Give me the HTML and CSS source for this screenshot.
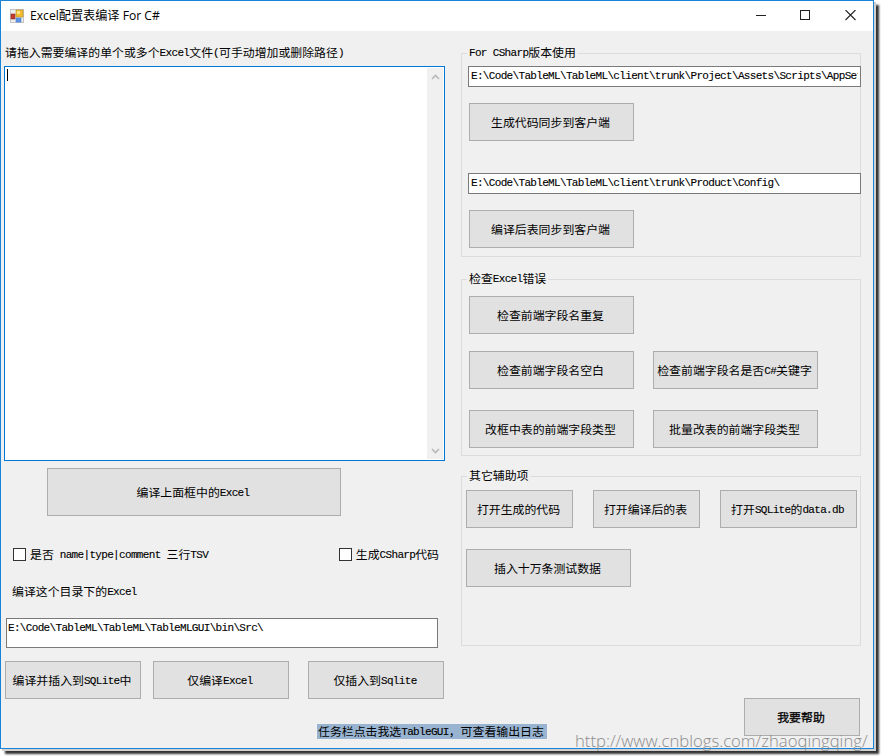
FILE: index.html
```html
<!DOCTYPE html>
<html lang="zh-CN">
<head>
<meta charset="utf-8">
<title>Excel配置表编译 For C#</title>
<link rel="stylesheet" href="styles.css">
</head>
<body>
<div class="window">
  <header class="titlebar">
    <svg class="app-icon" width="14" height="14" viewBox="0 0 14 14">
      <rect x=".5" y=".5" width="13" height="13" fill="#eee" stroke="#c4c4c4"/>
      <rect x="6" y="1" width="7" height="7" fill="#f2bd2c" stroke="#b98d2a" stroke-width=".6"/>
      <rect x="7" y="2" width="3" height="3" fill="#ffe28a"/>
      <rect x="1" y="5" width="4" height="5" fill="#c0392f" stroke="#8f2c26" stroke-width=".6"/>
      <rect x="6" y="9" width="5" height="4" fill="#5b94e8" stroke="#4a78c8" stroke-width=".6"/>
    </svg>
    <h1 class="title">Excel配置表编译 For C#</h1>
    <svg class="controls" width="102" height="12" viewBox="0 0 102 12" fill="none" stroke="#222">
      <path d="M0 5.500H10"/>
      <rect x="44.5" y=".5" width="9" height="9"/>
      <path d="M89.500 0L99.500 10M99.500 0L89.500 10" stroke-width="1.1"/>
    </svg>
  </header>
  <main class="body">
    <section class="left">
      <p class="label prompt">请拖入需要编译的单个或多个<i>Excel</i>文件<i>(</i>可手动增加或删除路径<i>)</i></p>
      <div class="files">
        <span class="caret"></span>
        <div class="scroll">
          <svg width="9" height="6" viewBox="0 0 9 6"><path d="M1 5L4.500 1.500L8 5" fill="none" stroke="#b8b8b8" stroke-width="1.7"/></svg>
          <svg width="9" height="6" viewBox="0 0 9 6"><path d="M1 1L4.500 4.500L8 1" fill="none" stroke="#b8b8b8" stroke-width="1.7"/></svg>
        </div>
      </div>
      <button class="btn main-btn">编译上面框中的<i>Excel</i></button>
      <div class="checks">
        <label class="check"><span class="box"></span><span>是否<i> name|type|comment </i>三行<i>TSV</i></span></label>
        <label class="check"><span class="box"></span><span>生成<i>CSharp</i>代码</span></label>
      </div>
      <p class="label dir">编译这个目录下的<i>Excel</i></p>
      <div class="input dir-input"><i>E:\Code\TableML\TableML\TableMLGUI\bin\Src\</i></div>
      <div class="actions">
        <button class="btn">编译并插入到<i>SQLite</i>中</button>
        <button class="btn">仅编译<i>Excel</i></button>
        <button class="btn">仅插入到<i>Sqlite</i></button>
      </div>
      <p class="hint">任务栏点击我选<i>TableGUI</i>，可查看输出日志</p>
    </section>
    <section class="right">
      <div class="group g1">
        <h2 class="legend"><i>For CSharp</i>版本使用</h2>
        <div class="input"><i>E:\Code\TableML\TableML\client\trunk\Project\Assets\Scripts\AppSet</i></div>
        <button class="btn wide">生成代码同步到客户端</button>
        <div class="input second"><i>E:\Code\TableML\TableML\client\trunk\Product\Config\</i></div>
        <button class="btn wide">编译后表同步到客户端</button>
      </div>
      <div class="group g2">
        <h2 class="legend">检查<i>Excel</i>错误</h2>
        <div class="checks-grid">
          <button class="btn wide solo">检查前端字段名重复</button>
          <button class="btn wide">检查前端字段名空白</button>
          <button class="btn wide">检查前端字段名是否<i>C#</i>关键字</button>
          <button class="btn wide">改框中表的前端字段类型</button>
          <button class="btn wide">批量改表的前端字段类型</button>
        </div>
      </div>
      <div class="group g3">
        <h2 class="legend">其它辅助项</h2>
        <div class="open-row">
          <button class="btn">打开生成的代码</button>
          <button class="btn">打开编译后的表</button>
          <button class="btn">打开<i>SQLite</i>的<i>data.db</i></button>
        </div>
        <button class="btn wide">插入十万条测试数据</button>
      </div>
      <button class="btn help">我要帮助</button>
    </section>
  </main>
</div>
<div class="watermark">http://www.cnblogs.com/zhaoqingqing/</div>
</body>
</html>
```
FILE: styles.css
```css
* { box-sizing: border-box; }
body {
  margin: 0;
  width: 881px;
  height: 756px;
  overflow: hidden;
  position: relative;
  background: #fff;
  color: #000;
  font: 11.9px/16px "Noto Sans CJK SC", sans-serif;
}
h1, h2, p { margin: 0; font-weight: 400; }
i {
  font: 11px/1 "Liberation Mono", monospace;
  letter-spacing: -0.67px;
  white-space: pre;
  position: relative;
  top: -1px;
  -webkit-text-stroke: .12px #000;
}
.window {
  width: 874px;
  height: 749px;
  background: #f0f0f0;
  border: 1px solid #1883d7;
  box-shadow: 2px 2px 0 0 #d0d0d0, 5px 5px 2px 0 #333;
}
.titlebar {
  height: 30px;
  background: #fff;
  display: flex;
  align-items: center;
  padding: 0 15px 0 9px;
}
.title {
  font: 12.15px/16px "Open Sans", "Noto Sans CJK SC", sans-serif;
  margin-left: 6px;
  flex: 1;
}
.body { display: flex; height: 717px; }
.left { width: 441px; margin-left: 3px; display: flex; flex-direction: column; }
.label { white-space: nowrap; }
.prompt { margin: 13px 0 6px 1px; }
.files {
  height: 395px;
  background: #fff;
  border: 1px solid #0078d7;
  display: flex;
  justify-content: space-between;
  padding: 1px;
}
.caret { width: 1px; height: 12px; margin: 1px 0 0 1px; background: #000; }
.scroll {
  width: 16px;
  background: #f0f0f0;
  display: flex;
  flex-direction: column;
  align-items: center;
  justify-content: space-between;
  padding: 6px 0 5px;
}
.btn {
  height: 38px;
  padding: 0 2px 0 0;
  border: 1px solid #adadad;
  border-radius: 0;
  background: #e1e1e1;
  color: #000;
  font: inherit;
  white-space: nowrap;
}
.main-btn { width: 294px; height: 48px; margin: 7px 0 0 43px; }
.checks { display: flex; justify-content: space-between; margin: 30px 6px 0 9px; }
.check { display: flex; align-items: center; gap: 4px; white-space: nowrap; }
.box { width: 13px; height: 13px; background: #fff; border: 1px solid #333; }
.dir { margin: 21px 0 0 8px; }
.input {
  height: 21px;
  border: 1px solid #7a7a7a;
  background: #fff;
  padding: 2px 2px 0;
  white-space: nowrap;
}
.input i { display: block; overflow: hidden; top: 0; line-height: 14px; }
.dir-input { width: 432px; height: 30px; margin: 19px 0 0 2px; padding-left: 1px; }
.actions { display: grid; grid-template-columns: repeat(3, 136px); margin: 13px 0 0 1px; column-gap: 12px; }
.actions .btn:last-child { margin-left: 7px; margin-right: -7px; }
.hint {
  align-self: flex-start;
  margin: 25px 0 0 313px;
  padding: 0 3px 0 1px;
  line-height: 13px;
  background: #99b4d1;
  white-space: nowrap;
}
.right { width: 400px; margin: 22px 0 0 16px; display: flex; flex-direction: column; }
.group { border: 1px solid #dcdcdc; padding-left: 7px; }
.legend {
  width: max-content;
  font: inherit;
  background: #f0f0f0;
  margin: -10px 0 6px -2px;
  padding: 0 2px;
}
.wide { width: 165px; }
.g1 { height: 204px; }
.g1 .input { margin: 0 -1px 16px -1px; }
.g1 .second { margin-top: 32px; }
.g2 { height: 177px; margin-top: 22px; }
.g2 .legend { margin-bottom: 10px; }
.checks-grid { display: grid; grid-template-columns: 165px 165px; column-gap: 19px; grid-template-rows: 55px 59px 38px; }
.solo { grid-column: 1 / 3; }
.g3 { height: 170px; margin-top: 20px; padding-left: 4px; }
.g3 .legend { margin: -10px 0 7px 1px; }
.open-row { display: grid; grid-template-columns: 107px 107px 137px; column-gap: 20px; margin-bottom: 21px; }
.help { width: 116px; align-self: flex-end; margin: 52px 1px 0 0; -webkit-text-stroke: .3px #000; }
.watermark {
  position: absolute;
  left: 575px;
  top: 730px;
  font: 300 16.7px/22px "Open Sans", sans-serif;
  color: #8c8c8c;
  white-space: nowrap;
}
```
